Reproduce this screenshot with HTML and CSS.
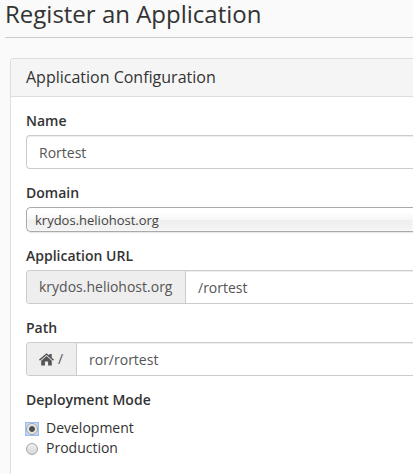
FILE: index.html
```html
<!DOCTYPE html>
<html lang="en">
<head>
<meta charset="utf-8">
<title>Register an Application</title>
<link rel="stylesheet" href="styles.css">
</head>
<body>
<main class="page">
  <h1 class="page-title">Register an Application</h1>
  <form class="panel">
    <h2 class="panel-heading">Application Configuration</h2>
    <div class="panel-body">
      <div class="group">
        <div class="label">Name</div>
        <div class="control">Rortest</div>
      </div>
      <div class="group">
        <div class="label">Domain</div>
        <div class="select">krydos.heliohost.org</div>
      </div>
      <div class="group">
        <div class="label">Application URL</div>
        <div class="control joined"><span class="addon addon-url">krydos.heliohost.org</span><span class="value">/rortest</span></div>
      </div>
      <div class="group">
        <div class="label">Path</div>
        <div class="control joined"><span class="addon addon-path"><svg class="home" viewBox="0 0 15 13" width="15" height="13"><path d="M0 6.600 7.500 .2 10.300 2.600V1h2.400v3.700L15 6.600l-.9 1.100-6.600-5.700-6.600 5.700z"/><path d="M2.200 7.700 7.500 3.100l5.300 4.600V12.500H9.100V8.500H5.900V12.500H2.200z"/></svg>/</span><span class="value">ror/rortest</span></div>
      </div>
      <div class="group">
        <div class="label mode">Deployment Mode</div>
        <div class="option"><span class="ring"><span class="radio checked"></span></span>Development</div>
        <div class="option"><span class="ring idle"><span class="radio"></span></span>Production</div>
      </div>
    </div>
  </form>
</main>
</body>
</html>
```
FILE: styles.css
```css
* { box-sizing: border-box; }
body {
  margin: 0;
  background: #fafafa;
  color: #333;
  font: 14px/20px "Open Sans", sans-serif;
}
.page { height: 474px; padding-left: 5px; white-space: nowrap; display: flex; flex-direction: column; }
.page-title {
  flex: none;
  margin: 0 0 20px;
  height: 38px;
  border-bottom: 1px solid #ccc;
  font-size: 24px;
  font-weight: 400;
  line-height: 28px;
}
.panel {
  flex: 1;
  min-height: 0;
  margin-left: 5px;
  border: 1px solid #ddd;
  border-width: 1px 0 0 1px;
  border-radius: 4px 0 0 0;
  background: #fff;
}
.panel-heading {
  margin: 0;
  height: 38px;
  padding: 0 15px;
  border-bottom: 1px solid #ddd;
  border-radius: 3px 0 0 0;
  background: #f5f5f5;
  font-size: 16px;
  font-weight: 400;
  line-height: 37px;
}
.panel-body { padding: 14px 0 0 15px; }
.group { margin-bottom: 14px; }
.group:last-child { margin-bottom: 0; }
.label { margin-bottom: 4px; font-weight: 600; }
.mode { margin-bottom: 8px; }
.control {
  height: 34px;
  padding-left: 12px;
  border: 1px solid #ccc;
  border-right: 0;
  border-radius: 4px 0 0 4px;
  box-shadow: inset 0 1px 1px rgba(0,0,0,.075);
  color: #555;
  line-height: 34px;
}
.joined { display: flex; padding: 0; box-shadow: none; }
.addon {
  flex: none;
  padding-left: 12px;
  border-right: 1px solid #ccc;
  border-radius: 3px 0 0 3px;
  background: #eee;
  line-height: 32px;
}
.addon-url { width: 159px; }
.addon-path { display: flex; align-items: center; width: 50px; gap: 4px; }
.value { flex: 1; padding-left: 12px; box-shadow: inset 0 1px 1px rgba(0,0,0,.075); }
.home { fill: #555; }
.select {
  height: 25px;
  padding-left: 8px;
  border: 1px solid #aaa;
  border-right: 0;
  border-radius: 5px 0 0 5px;
  background: linear-gradient(#fff 20%, #f6f6f6 50%, #eee 52%, #f4f4f4 100%);
  box-shadow: inset 0 0 3px #fff, 0 1px 1px rgba(0,0,0,.1);
  color: #444;
  font-size: 13px;
  line-height: 25px;
}
.option { display: flex; align-items: center; height: 20px; line-height: 20px; }
.ring {
  width: 14px;
  height: 14px;
  margin: 1px 6px 0 -1px;
  border: 1px solid #9abcf4;
  background: #c3d7fa;
}
.idle { border-color: transparent; background: none; }
.radio {
  display: block;
  width: 12px;
  height: 12px;
  border: 1px solid #a5a5a5;
  border-radius: 50%;
  background: linear-gradient(#eee, #d8d8d8);
}
.option .ring { margin-right: 7px; }
.checked {
  background: radial-gradient(circle, #505050 0 2.5px, #e6e6e6 3.3px);
}
```
